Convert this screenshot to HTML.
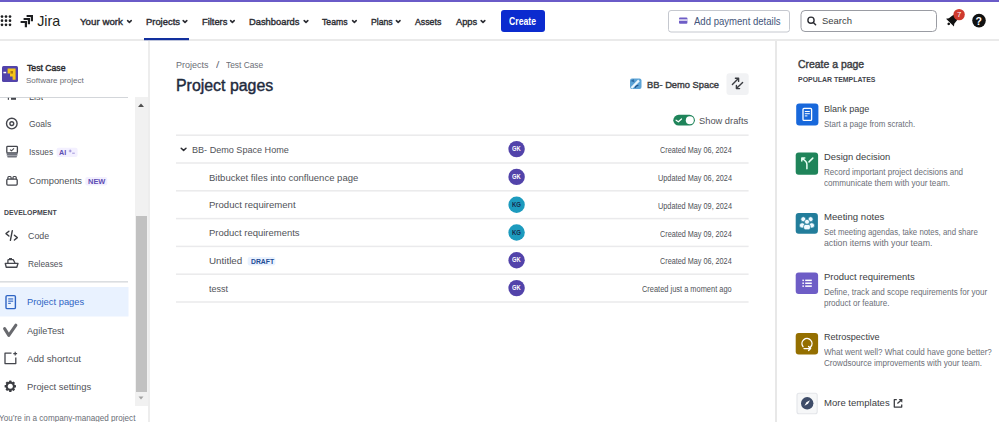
<!DOCTYPE html>
<html><head><meta charset="utf-8"><style>
html,body{margin:0;padding:0;width:999px;height:422px;overflow:hidden;background:#fff;font-family:"Liberation Sans", sans-serif;}
.t{position:absolute;white-space:nowrap;line-height:1;transform-origin:0 0;}
.a{position:absolute;}
</style></head><body>
<!-- header -->
<div class="a" style="left:0;top:0;width:999px;height:2px;background:#6A5BC8"></div>
<div class="a" style="left:0;top:39px;width:999px;height:2px;background:#EAEAEA"></div>
<svg class="a" style="left:0;top:0" width="999" height="41">
  <g fill="#1E1F21">
    <circle cx="2" cy="16.6" r="1.35"/><circle cx="6" cy="16.6" r="1.35"/><circle cx="10" cy="16.6" r="1.35"/>
    <circle cx="2" cy="20.7" r="1.35"/><circle cx="6" cy="20.7" r="1.35"/><circle cx="10" cy="20.7" r="1.35"/>
    <circle cx="2" cy="24.8" r="1.35"/><circle cx="6" cy="24.8" r="1.35"/><circle cx="10" cy="24.8" r="1.35"/>
  </g>
  <!-- jira logo -->
  <g fill="none" stroke="#1E1F21" stroke-width="2.2" stroke-linejoin="miter">
    <path d="M26.6 16 L31.9 16 L31.9 21.2"/>
    <path d="M23.6 19 L28.9 19 L28.9 24.2"/>
    <path d="M20.6 22 L25.9 22 L25.9 27.3"/>
  </g>
  <g fill="none" stroke="#2C2D33" stroke-width="1.6" stroke-linecap="round" stroke-linejoin="round">
    <path d="M127.6 20.6 L129.4 22.4 L131.2 20.6"/>
    <path d="M183.2 20.6 L185 22.4 L186.8 20.6"/>
    <path d="M230.6 20.6 L232.4 22.4 L234.2 20.6"/>
    <path d="M304.2 20.6 L306 22.4 L307.8 20.6"/>
    <path d="M352.6 20.6 L354.4 22.4 L356.2 20.6"/>
    <path d="M396.4 20.6 L398.2 22.4 L400 20.6"/>
    <path d="M481.2 20.6 L483 22.4 L484.8 20.6"/>
  </g>
  <rect x="144" y="38" width="45" height="2.2" fill="#12309E"/>
  <rect x="501" y="10" width="44" height="22" rx="3" fill="#0B2BCF"/>
  <rect x="668.5" y="10.5" width="121" height="21.5" rx="2.5" fill="#fff" stroke="#C5C8CF" stroke-width="1"/>
  <rect x="679" y="17.6" width="8.4" height="6.2" rx="1" fill="#6E5DC6"/>
  <rect x="679" y="19.4" width="8.4" height="1.3" fill="#fff"/>
  <rect x="801" y="10.5" width="135.5" height="21" rx="4" fill="#fff" stroke="#9A9CA3" stroke-width="1"/>
  <circle cx="811" cy="20.2" r="3.1" fill="none" stroke="#2C2D33" stroke-width="1.4"/>
  <path d="M813.3 22.5 L815.6 24.8" stroke="#2C2D33" stroke-width="1.5" stroke-linecap="round"/>
  <!-- bell -->
  <g transform="translate(950 22.6) rotate(45) scale(1.12)" fill="#111">
    <path d="M-5 0 L5 0 L3.4 -2 L2.9 -6 Q2.4 -8.8 0 -8.8 Q-2.4 -8.8 -2.9 -6 L-3.4 -2 Z"/>
    <circle cx="0" cy="1.6" r="1.2"/>
  </g>
  <circle cx="959.1" cy="14.6" r="5.7" fill="#CF3A2E"/>
  <circle cx="979" cy="20.6" r="6.8" fill="#111"/>
</svg>
<span class="t" style="left:957px;top:10.6px;font-size:7.8px;color:#fff">7</span>
<span class="t" style="left:975.6px;top:15.6px;font-size:10.5px;font-weight:700;color:#fff">?</span>
<span class="t" style="left:37.2px;top:13.8px;font-size:14.3px;color:#1E1F21">Jira</span>

<!-- sidebar -->
<div class="a" style="left:147.5px;top:41px;width:2px;height:381px;background:#EDEDED"></div>
<div class="a" style="left:0;top:97px;width:128px;height:1px;background:#D3D6DA"></div>
<div class="a" style="left:135px;top:97px;width:13px;height:309px;background:#F1F1F1"></div>
<div class="a" style="left:135.5px;top:216px;width:11.5px;height:175.5px;background:#C1C1C1"></div>
<svg class="a" style="left:0;top:41px" width="149" height="381">
  <path d="M138 66 L144 66 L141 62.5 Z" fill="#505050"/>
  <path d="M138.5 355.5 L143.5 355.5 L141 358.5 Z" fill="#A3A3A3"/>
  <!-- project icon -->
  <rect x="2" y="25" width="16" height="16" rx="1.5" fill="#5243AA"/>
  <rect x="3.4" y="30.8" width="2.8" height="1.5" fill="#fff"/>
  <path d="M7.6 27.5 L15.6 27.5 L15.6 38.8 L12.6 38.8 L12.6 35.5 L10 35.5 L10 32.5 L7.6 32.5 Z" fill="#F5C518"/>
  <rect x="10.5" y="30" width="2.5" height="2.6" fill="#B07A10"/>
  <!-- list icon remnant -->
  <rect x="11" y="56.8" width="5" height="2" fill="#44464D"/>
  <rect x="7.8" y="56.8" width="1.2" height="2" fill="#44464D"/>
  <!-- goals -->
  <circle cx="11.8" cy="82.6" r="5.3" fill="none" stroke="#44464D" stroke-width="1.4"/>
  <circle cx="11.8" cy="82.6" r="1.9" fill="none" stroke="#44464D" stroke-width="1.4"/>
  <!-- issues -->
  <rect x="6.8" y="105.4" width="10.6" height="6.4" rx="0.8" fill="none" stroke="#44464D" stroke-width="1.3"/>
  <path d="M10 108.6 L11.5 109.8 L14 107.4" fill="none" stroke="#44464D" stroke-width="1.1"/>
  <path d="M6.3 111.8 L17.9 111.8 L16.6 116.6 L7.6 116.6 Z" fill="#70737D"/>
  <rect x="6.5" y="114" width="11.2" height="0.7" fill="#B5B7BD"/>
  <!-- AI badge -->
  <rect x="56.6" y="106.7" width="21" height="9.3" rx="2" fill="#F3F0FF"/>
  <path d="M70.2 108.6 L70.2 111.4 M68.8 110 L71.6 110 M72.2 112.2 L74.8 112.2" stroke="#8C7FD0" stroke-width="0.8"/>
  <!-- components -->
  <rect x="6.8" y="138.2" width="10.4" height="5.9" rx="1" fill="none" stroke="#44464D" stroke-width="1.3"/>
  <path d="M7.9 138.2 L7.9 136.4 Q7.9 135.5 8.8 135.5 L10.2 135.5 Q11.1 135.5 11.1 136.4 L11.1 138.2 M13 138.2 L13 136.4 Q13 135.5 13.9 135.5 L15.3 135.5 Q16.2 135.5 16.2 136.4 L16.2 138.2" fill="none" stroke="#44464D" stroke-width="1.2"/>
  <rect x="85.3" y="136" width="22" height="8.6" rx="2" fill="#F3F0FF"/>
  <!-- code -->
  <path d="M8.9 190.2 L6 192.6 L8.9 195 M14.4 194.2 L17.3 196.6 L14.4 199 M12.3 189.6 L10.4 199.4" fill="none" stroke="#3B3D42" stroke-width="1.4" stroke-linecap="round" stroke-linejoin="round"/>
  <!-- releases -->
  <path d="M5.3 222.4 L18 222.4 L16.8 226.2 L6.2 226.2 Z" fill="none" stroke="#44464D" stroke-width="1.4" stroke-linejoin="round"/>
  <path d="M7.9 222 L7.9 219.4 Q7.9 218.6 8.7 218.6 L13.2 218.6 L15 222" fill="none" stroke="#44464D" stroke-width="1.3" stroke-linejoin="round"/>
  <path d="M9.6 218.4 L9.6 217.5 L12 217.5" fill="none" stroke="#44464D" stroke-width="1.1"/>
  <!-- separator -->
  <rect x="0" y="240.2" width="128" height="1.3" fill="#D3D6DA"/>
  <rect x="0" y="246" width="128.5" height="29.5" fill="#E9F2FF"/>
  <!-- project pages icon -->
  <rect x="6" y="254.6" width="9.4" height="13" rx="1.2" fill="none" stroke="#2E64C4" stroke-width="1.4"/>
  <rect x="8.2" y="257.4" width="5" height="1.1" fill="#2E64C4"/>
  <rect x="8.2" y="259.6" width="5" height="1.1" fill="#2E64C4"/>
  <rect x="8.2" y="261.8" width="2.6" height="1.1" fill="#2E64C4"/>
  <!-- agiletest check -->
  <path d="M4.6 287.6 L8.8 294.4 L15.9 284.2" fill="none" stroke="#68696E" stroke-width="3" stroke-linecap="round" stroke-linejoin="round"/>
  <!-- add shortcut -->
  <path d="M11.5 312.2 L5 312.2 L5 322.6 L15.8 322.6 L15.8 316.5" fill="none" stroke="#44464D" stroke-width="1.3" stroke-linejoin="round"/>
  <path d="M15.2 310.8 L15.2 314.6 M13.3 312.7 L17.1 312.7" stroke="#44464D" stroke-width="1.2"/>
  <!-- settings -->
  <g transform="translate(10.3 345.2)" fill="#3B3D42">
    <circle r="3.6" fill="none" stroke="#3B3D42" stroke-width="2"/>
    <rect x="-1.2" y="-5.7" width="2.4" height="11.4" rx="0.5"/>
    <rect x="-1.2" y="-5.7" width="2.4" height="11.4" rx="0.5" transform="rotate(45)"/>
    <rect x="-1.2" y="-5.7" width="2.4" height="11.4" rx="0.5" transform="rotate(90)"/>
    <rect x="-1.2" y="-5.7" width="2.4" height="11.4" rx="0.5" transform="rotate(135)"/>
    <circle r="2.5" fill="#fff"/>
  </g>
</svg>

<!-- main -->
<svg class="a" style="left:150px;top:41px" width="626" height="381">
  <!-- space icon -->
  <rect x="480" y="37.4" width="11.5" height="10.6" rx="2" fill="#5CA3D6"/>
  <path d="M480.6 40 L483.6 38 L484.6 41.6 Z" fill="#2E6DA6"/>
  <path d="M481.5 47 L489 39.4" stroke="#EAF6FD" stroke-width="2.3"/>
  <path d="M485 46.8 Q486.2 44.2 488.4 44.4" fill="none" stroke="#1F4F86" stroke-width="1.4"/>
  <!-- swap button -->
  <rect x="576.5" y="32.3" width="22.2" height="21.8" rx="3" fill="#F1F2F4"/>
  <path d="M582.4 43.6 L588.6 37.3 M585.4 37.3 L588.6 37.3 L588.6 40.4" fill="none" stroke="#3B3D42" stroke-width="1.4" stroke-linecap="round" stroke-linejoin="round"/>
  <path d="M592.6 41.4 L586.4 47.6 M586.4 44.5 L586.4 47.6 L589.6 47.6" fill="none" stroke="#3B3D42" stroke-width="1.4" stroke-linecap="round" stroke-linejoin="round"/>
  <!-- toggle -->
  <rect x="523.3" y="73.8" width="21.6" height="10.8" rx="5.4" fill="#1F845A"/>
  <circle cx="539.8" cy="79.2" r="4" fill="#fff"/>
  <path d="M526.1 79.2 L528.4 80.8 L531.5 78" fill="none" stroke="#fff" stroke-width="1.2" stroke-linecap="round" stroke-linejoin="round"/>
  <!-- rows -->
  <g fill="#EAEAEC">
    <rect x="26" y="93.45" width="572.6" height="1.5"/>
    <rect x="26" y="121.25" width="572.6" height="1.5"/>
    <rect x="26" y="149.05" width="572.6" height="1.5"/>
    <rect x="26" y="176.85" width="572.6" height="1.5"/>
    <rect x="26" y="204.65" width="572.6" height="1.5"/>
    <rect x="26" y="232.45" width="572.6" height="1.5"/>
    <rect x="26" y="260.25" width="572.6" height="1.5"/>
  </g>
  <path d="M31.2 107.2 L33.6 109.4 L36 107.2" fill="none" stroke="#2C2D33" stroke-width="1.5" stroke-linecap="round" stroke-linejoin="round"/>
  <g>
    <circle cx="366.6" cy="108.1" r="8.2" fill="#5243AA"/>
    <circle cx="366.6" cy="135.9" r="8.2" fill="#5243AA"/>
    <circle cx="366.6" cy="163.7" r="8.2" fill="#1D9BBE"/>
    <circle cx="366.6" cy="191.5" r="8.2" fill="#1D9BBE"/>
    <circle cx="366.6" cy="219.3" r="8.2" fill="#5243AA"/>
    <circle cx="366.6" cy="247.1" r="8.2" fill="#5243AA"/>
  </g>
  <rect x="97.7" y="216" width="27.7" height="8.6" rx="2" fill="#E9F2FF"/>
</svg>

<!-- right panel -->
<div class="a" style="left:775px;top:41px;width:1.5px;height:381px;background:#E8E8E8"></div>
<svg class="a" style="left:777px;top:41px" width="222" height="381">
  <rect x="19.2" y="62.4" width="22.2" height="22.2" rx="3" fill="#1868DB"/>
  <rect x="26" y="67.4" width="8.6" height="12" rx="1" fill="none" stroke="#fff" stroke-width="1.3"/>
  <rect x="27.8" y="70" width="5" height="1" fill="#fff"/><rect x="27.8" y="72.2" width="5" height="1" fill="#fff"/><rect x="27.8" y="74.4" width="2.6" height="1" fill="#fff"/>
  <rect x="18.7" y="111.5" width="22.4" height="22.2" rx="3" fill="#1F845A"/>
  <path d="M29.9 127.8 L29.9 123.2 Q29.9 121.6 28.6 120.3 L25.2 117.2 M32 120.9 L35.8 117.1 M24.8 120 L24.8 117 L27.8 117" fill="none" stroke="#E8FFF4" stroke-width="1.5" stroke-linecap="round" stroke-linejoin="round"/>
  <rect x="18.7" y="172" width="22.2" height="20.8" rx="3" fill="#227D9B"/>
  <g fill="#F0FAFF" stroke="#227D9B" stroke-width="0.7">
    <circle cx="26.3" cy="178.2" r="2.5"/><circle cx="33.6" cy="178.2" r="2.5"/>
    <ellipse cx="25.2" cy="184.4" rx="2.8" ry="2.6"/><ellipse cx="34.7" cy="184.4" rx="2.8" ry="2.6"/>
    <circle cx="30" cy="180.8" r="2.5"/>
    <rect x="26.6" y="183.4" width="6.8" height="5.4" rx="2"/>
  </g>
  <rect x="18.7" y="231.5" width="22.4" height="21.4" rx="3" fill="#6E5DC6"/>
  <g fill="#fff">
    <rect x="25.4" y="238.6" width="1.5" height="1.5"/><rect x="28.2" y="238.6" width="6.6" height="1.5"/>
    <rect x="25.4" y="241.5" width="1.5" height="1.5"/><rect x="28.2" y="241.5" width="6.6" height="1.5"/>
    <rect x="25.4" y="244.4" width="1.5" height="1.5"/><rect x="28.2" y="244.4" width="6.6" height="1.5"/>
  </g>
  <rect x="18.7" y="292" width="22.4" height="21.4" rx="3" fill="#946F00"/>
  <path d="M33.6 306 A5 5 0 1 0 26 305.6 M27 307.6 L33.4 307.6 M31.6 305.6 L33.6 307.6 L31.6 309.4" fill="none" stroke="#fff" stroke-width="1.4" stroke-linecap="round" stroke-linejoin="round"/>
  <rect x="20" y="352.2" width="20.2" height="20.6" rx="2" fill="#F6F7F8" stroke="#E3E5E9" stroke-width="1.1"/>
  <circle cx="30.2" cy="362.3" r="6.2" fill="#3E4C68"/>
  <path d="M27.5 364.7 L29.4 361.2 L33 359.3 L31 362.8 Z" fill="#fff"/>
  <path d="M119.8 358.7 L117.3 358.7 L117.3 366.1 L124.7 366.1 L124.7 363.4 M120.4 362.4 L123.8 359.4" fill="none" stroke="#3B3D42" stroke-width="1.3" stroke-linejoin="round"/>
  <path d="M125.4 357.9 L121.6 358.1 L125.2 361.7 Z" fill="#3B3D42"/>
</svg>

<span class="t" style="left:80.30px;top:16.79px;font-size:9.7px;font-weight:400;color:#2C2D33;transform:scaleX(1.0053);-webkit-text-stroke:0.4px #2C2D33;">Your work</span><span class="t" style="left:145.60px;top:16.79px;font-size:9.7px;font-weight:400;color:#2C2D33;transform:scaleX(0.9701);-webkit-text-stroke:0.4px #2C2D33;">Projects</span><span class="t" style="left:201.80px;top:16.79px;font-size:9.7px;font-weight:400;color:#2C2D33;transform:scaleX(0.9613);-webkit-text-stroke:0.4px #2C2D33;">Filters</span><span class="t" style="left:249.30px;top:16.79px;font-size:9.7px;font-weight:400;color:#2C2D33;transform:scaleX(0.9639);-webkit-text-stroke:0.4px #2C2D33;">Dashboards</span><span class="t" style="left:322.40px;top:16.79px;font-size:9.7px;font-weight:400;color:#2C2D33;transform:scaleX(0.8924);-webkit-text-stroke:0.4px #2C2D33;">Teams</span><span class="t" style="left:370.90px;top:16.79px;font-size:9.7px;font-weight:400;color:#2C2D33;transform:scaleX(0.8938);-webkit-text-stroke:0.4px #2C2D33;">Plans</span><span class="t" style="left:415.20px;top:16.79px;font-size:9.7px;font-weight:400;color:#2C2D33;transform:scaleX(0.9032);-webkit-text-stroke:0.4px #2C2D33;">Assets</span><span class="t" style="left:456.00px;top:16.79px;font-size:9.7px;font-weight:400;color:#2C2D33;transform:scaleX(0.9579);-webkit-text-stroke:0.4px #2C2D33;">Apps</span><span class="t" style="left:509.10px;top:16.54px;font-size:10.0px;font-weight:700;color:#FFFFFF;transform:scaleX(0.8680);">Create</span><span class="t" style="left:694.00px;top:16.57px;font-size:10.2px;font-weight:400;color:#44557A;transform:scaleX(0.9380);">Add payment details</span><span class="t" style="left:822.20px;top:15.67px;font-size:9.6px;font-weight:400;color:#3B3D42;transform:scaleX(0.9846);">Search</span><span class="t" style="left:26.70px;top:63.98px;font-size:9.0px;font-weight:400;color:#292A2E;transform:scaleX(0.9622);-webkit-text-stroke:0.4px #292A2E;">Test Case</span><span class="t" style="left:26.30px;top:77.23px;font-size:8.0px;font-weight:400;color:#6B6E76;transform:scaleX(0.9969);">Software project</span><span class="t" style="left:28.80px;top:91.82px;font-size:9.9px;font-weight:400;color:#505258;transform:scaleX(0.9217);clip-path:inset(5.9px 0 0 0);">List</span><span class="t" style="left:29.20px;top:118.92px;font-size:9.9px;font-weight:400;color:#505258;transform:scaleX(0.8624);">Goals</span><span class="t" style="left:29.20px;top:147.12px;font-size:9.9px;font-weight:400;color:#505258;transform:scaleX(0.8426);">Issues</span><span class="t" style="left:59.00px;top:148.74px;font-size:7.4px;font-weight:700;color:#5E4DB2;transform:scaleX(0.9677);">AI</span><span class="t" style="left:29.20px;top:175.82px;font-size:9.9px;font-weight:400;color:#505258;transform:scaleX(0.9455);">Components</span><span class="t" style="left:87.90px;top:177.94px;font-size:7.4px;font-weight:700;color:#5E4DB2;transform:scaleX(1.0077);">NEW</span><span class="t" style="left:3.60px;top:209.41px;font-size:7.2px;font-weight:700;color:#44464D;transform:scaleX(0.9635);">DEVELOPMENT</span><span class="t" style="left:28.20px;top:231.42px;font-size:9.9px;font-weight:400;color:#505258;transform:scaleX(0.8957);">Code</span><span class="t" style="left:28.20px;top:258.82px;font-size:9.9px;font-weight:400;color:#505258;transform:scaleX(0.8416);">Releases</span><span class="t" style="left:26.50px;top:297.02px;font-size:9.9px;font-weight:400;color:#2E64C4;transform:scaleX(0.9463);">Project pages</span><span class="t" style="left:26.50px;top:326.02px;font-size:9.9px;font-weight:400;color:#505258;transform:scaleX(0.9250);">AgileTest</span><span class="t" style="left:27.00px;top:354.12px;font-size:9.9px;font-weight:400;color:#505258;transform:scaleX(0.9731);">Add shortcut</span><span class="t" style="left:27.00px;top:382.02px;font-size:9.9px;font-weight:400;color:#505258;transform:scaleX(0.9501);">Project settings</span><span class="t" style="left:-1.00px;top:413.72px;font-size:8.6px;font-weight:400;color:#6B6E76;transform:scaleX(0.9445);">You’re in a company-managed project</span><span class="t" style="left:176.00px;top:61.18px;font-size:9.0px;font-weight:400;color:#6B6E76;">Projects</span><span class="t" style="left:215.50px;top:61.18px;font-size:9.0px;font-weight:400;color:#6B6E76;transform:scaleX(1.3333);">/</span><span class="t" style="left:225.90px;top:61.18px;font-size:9.0px;font-weight:400;color:#6B6E76;transform:scaleX(0.9297);">Test Case</span><span class="t" style="left:175.58px;top:77.79px;font-size:15.6px;font-weight:400;color:#1E2A3D;transform:scaleX(1.0195);-webkit-text-stroke:0.4px #1E2A3D;">Project pages</span><span class="t" style="left:647.00px;top:80.07px;font-size:9.6px;font-weight:400;color:#3B3D42;transform:scaleX(0.9718);-webkit-text-stroke:0.4px #3B3D42;">BB- Demo Space</span><span class="t" style="left:699.30px;top:115.52px;font-size:9.9px;font-weight:400;color:#505258;transform:scaleX(0.9424);">Show drafts</span><span class="t" style="left:192.40px;top:144.82px;font-size:9.9px;font-weight:400;color:#505258;transform:scaleX(0.9189);">BB- Demo Space Home</span><span class="t" style="left:660.00px;top:146.17px;font-size:8.3px;font-weight:400;color:#505258;transform:scaleX(0.8729);">Created May 06, 2024</span><span class="t" style="left:512.20px;top:146.18px;font-size:6.4px;font-weight:700;color:#FFFFFF;transform:scaleX(0.9026);">GK</span><span class="t" style="left:208.50px;top:172.62px;font-size:9.9px;font-weight:400;color:#505258;transform:scaleX(0.9645);">Bitbucket files into confluence page</span><span class="t" style="left:657.70px;top:173.97px;font-size:8.3px;font-weight:400;color:#505258;transform:scaleX(0.8810);">Updated May 06, 2024</span><span class="t" style="left:512.20px;top:173.98px;font-size:6.4px;font-weight:700;color:#FFFFFF;transform:scaleX(0.9026);">GK</span><span class="t" style="left:208.50px;top:200.42px;font-size:9.9px;font-weight:400;color:#505258;transform:scaleX(0.9674);">Product requirement</span><span class="t" style="left:657.70px;top:201.77px;font-size:8.3px;font-weight:400;color:#505258;transform:scaleX(0.8810);">Updated May 09, 2024</span><span class="t" style="left:512.20px;top:201.78px;font-size:6.4px;font-weight:700;color:#172B4D;transform:scaleX(0.9360);">KG</span><span class="t" style="left:208.50px;top:228.22px;font-size:9.9px;font-weight:400;color:#505258;transform:scaleX(0.9591);">Product requirements</span><span class="t" style="left:660.00px;top:229.57px;font-size:8.3px;font-weight:400;color:#505258;transform:scaleX(0.8729);">Created May 09, 2024</span><span class="t" style="left:512.20px;top:229.58px;font-size:6.4px;font-weight:700;color:#172B4D;transform:scaleX(0.9360);">KG</span><span class="t" style="left:208.50px;top:256.02px;font-size:9.9px;font-weight:400;color:#505258;transform:scaleX(0.9942);">Untitled</span><span class="t" style="left:660.00px;top:257.37px;font-size:8.3px;font-weight:400;color:#505258;transform:scaleX(0.8729);">Created May 06, 2024</span><span class="t" style="left:512.20px;top:257.38px;font-size:6.4px;font-weight:700;color:#FFFFFF;transform:scaleX(0.9026);">GK</span><span class="t" style="left:208.50px;top:283.82px;font-size:9.9px;font-weight:400;color:#505258;transform:scaleX(0.9095);">tesst</span><span class="t" style="left:642.00px;top:285.17px;font-size:8.3px;font-weight:400;color:#505258;transform:scaleX(0.8959);">Created just a moment ago</span><span class="t" style="left:512.20px;top:285.18px;font-size:6.4px;font-weight:700;color:#FFFFFF;transform:scaleX(0.9026);">GK</span><span class="t" style="left:250.50px;top:258.34px;font-size:7.4px;font-weight:700;color:#1F4C94;transform:scaleX(0.9206);">DRAFT</span><span class="t" style="left:798.20px;top:59.63px;font-size:10.0px;font-weight:400;color:#3B3D42;transform:scaleX(1.0436);-webkit-text-stroke:0.4px #3B3D42;">Create a page</span><span class="t" style="left:798.20px;top:75.72px;font-size:7.3px;font-weight:700;color:#44464D;transform:scaleX(0.9524);">POPULAR TEMPLATES</span><span class="t" style="left:824.00px;top:104.12px;font-size:9.9px;font-weight:400;color:#3B3D42;transform:scaleX(0.9174);">Blank page</span><span class="t" style="left:824.00px;top:120.29px;font-size:8.4px;font-weight:400;color:#6B6E76;transform:scaleX(0.9466);">Start a page from scratch.</span><span class="t" style="left:823.90px;top:151.92px;font-size:9.9px;font-weight:400;color:#3B3D42;transform:scaleX(0.9491);">Design decision</span><span class="t" style="left:823.90px;top:168.09px;font-size:8.4px;font-weight:400;color:#6B6E76;transform:scaleX(0.9575);">Record important project decisions and</span><span class="t" style="left:823.90px;top:178.99px;font-size:8.4px;font-weight:400;color:#6B6E76;transform:scaleX(0.9696);">communicate them with your team.</span><span class="t" style="left:823.90px;top:211.92px;font-size:9.9px;font-weight:400;color:#3B3D42;transform:scaleX(0.9727);">Meeting notes</span><span class="t" style="left:823.90px;top:228.09px;font-size:8.4px;font-weight:400;color:#6B6E76;transform:scaleX(0.9357);">Set meeting agendas, take notes, and share</span><span class="t" style="left:823.90px;top:238.99px;font-size:8.4px;font-weight:400;color:#6B6E76;transform:scaleX(1.0448);">action items with your team.</span><span class="t" style="left:823.90px;top:271.92px;font-size:9.9px;font-weight:400;color:#3B3D42;transform:scaleX(0.9601);">Product requirements</span><span class="t" style="left:823.90px;top:288.09px;font-size:8.4px;font-weight:400;color:#6B6E76;transform:scaleX(0.9605);">Define, track and scope requirements for your</span><span class="t" style="left:823.90px;top:298.99px;font-size:8.4px;font-weight:400;color:#6B6E76;transform:scaleX(0.9558);">product or feature.</span><span class="t" style="left:823.90px;top:331.92px;font-size:9.9px;font-weight:400;color:#3B3D42;transform:scaleX(0.9198);">Retrospective</span><span class="t" style="left:823.90px;top:348.09px;font-size:8.4px;font-weight:400;color:#6B6E76;transform:scaleX(0.9585);">What went well? What could have gone better?</span><span class="t" style="left:823.90px;top:358.99px;font-size:8.4px;font-weight:400;color:#6B6E76;transform:scaleX(0.9672);">Crowdsource improvements with your team.</span><span class="t" style="left:823.90px;top:397.62px;font-size:9.9px;font-weight:400;color:#3B3D42;transform:scaleX(0.9645);">More templates</span>
</body></html>
